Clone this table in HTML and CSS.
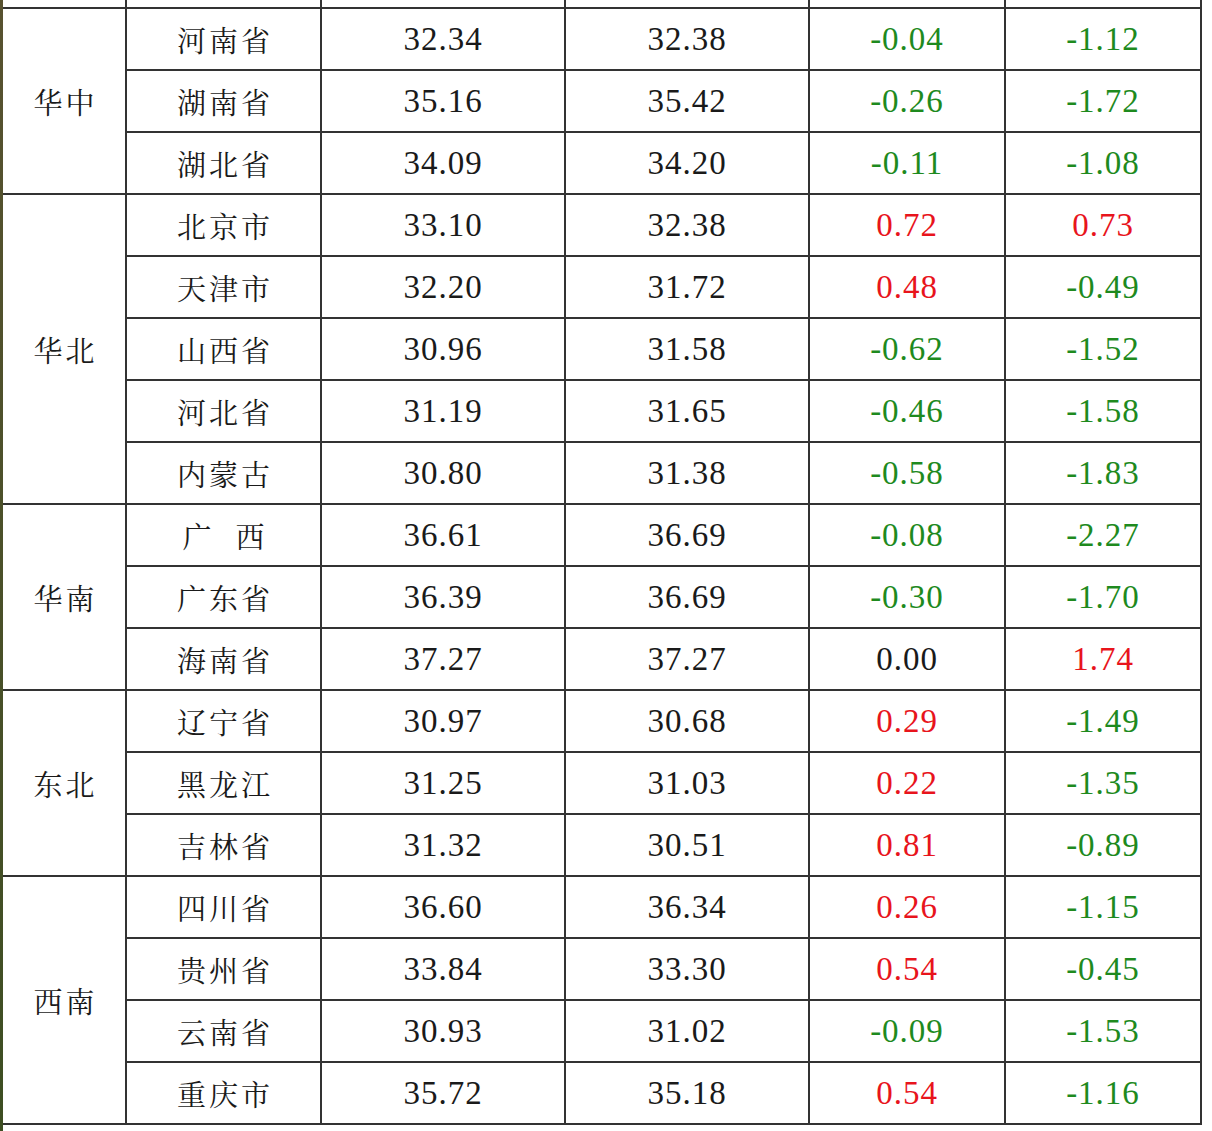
FILE: index.html
```html
<!DOCTYPE html>
<html lang="zh">
<head>
<meta charset="utf-8">
<link rel="stylesheet" href="styles.css">
</head>
<body>
<div class="frame">
<table class="prices">
<colgroup>
<col class="c-region"><col class="c-prov"><col class="c-num"><col class="c-num"><col class="c-chg"><col class="c-chg">
</colgroup>
<tbody>
<tr class="cut"><td></td><td></td><td></td><td></td><td></td><td></td></tr>
<tr><td class="region" rowspan="3">华中</td><td class="prov">河南省</td><td class="num">32.34</td><td class="num">32.38</td><td class="num down">-0.04</td><td class="num down">-1.12</td></tr>
<tr><td class="prov">湖南省</td><td class="num">35.16</td><td class="num">35.42</td><td class="num down">-0.26</td><td class="num down">-1.72</td></tr>
<tr><td class="prov">湖北省</td><td class="num">34.09</td><td class="num">34.20</td><td class="num down">-0.11</td><td class="num down">-1.08</td></tr>
<tr><td class="region" rowspan="5">华北</td><td class="prov">北京市</td><td class="num">33.10</td><td class="num">32.38</td><td class="num up">0.72</td><td class="num up">0.73</td></tr>
<tr><td class="prov">天津市</td><td class="num">32.20</td><td class="num">31.72</td><td class="num up">0.48</td><td class="num down">-0.49</td></tr>
<tr><td class="prov">山西省</td><td class="num">30.96</td><td class="num">31.58</td><td class="num down">-0.62</td><td class="num down">-1.52</td></tr>
<tr><td class="prov">河北省</td><td class="num">31.19</td><td class="num">31.65</td><td class="num down">-0.46</td><td class="num down">-1.58</td></tr>
<tr><td class="prov">内蒙古</td><td class="num">30.80</td><td class="num">31.38</td><td class="num down">-0.58</td><td class="num down">-1.83</td></tr>
<tr><td class="region" rowspan="3">华南</td><td class="prov">广&nbsp;&nbsp;西</td><td class="num">36.61</td><td class="num">36.69</td><td class="num down">-0.08</td><td class="num down">-2.27</td></tr>
<tr><td class="prov">广东省</td><td class="num">36.39</td><td class="num">36.69</td><td class="num down">-0.30</td><td class="num down">-1.70</td></tr>
<tr><td class="prov">海南省</td><td class="num">37.27</td><td class="num">37.27</td><td class="num">0.00</td><td class="num up">1.74</td></tr>
<tr><td class="region" rowspan="3">东北</td><td class="prov">辽宁省</td><td class="num">30.97</td><td class="num">30.68</td><td class="num up">0.29</td><td class="num down">-1.49</td></tr>
<tr><td class="prov">黑龙江</td><td class="num">31.25</td><td class="num">31.03</td><td class="num up">0.22</td><td class="num down">-1.35</td></tr>
<tr><td class="prov">吉林省</td><td class="num">31.32</td><td class="num">30.51</td><td class="num up">0.81</td><td class="num down">-0.89</td></tr>
<tr><td class="region" rowspan="4">西南</td><td class="prov">四川省</td><td class="num">36.60</td><td class="num">36.34</td><td class="num up">0.26</td><td class="num down">-1.15</td></tr>
<tr><td class="prov">贵州省</td><td class="num">33.84</td><td class="num">33.30</td><td class="num up">0.54</td><td class="num down">-0.45</td></tr>
<tr><td class="prov">云南省</td><td class="num">30.93</td><td class="num">31.02</td><td class="num down">-0.09</td><td class="num down">-1.53</td></tr>
<tr><td class="prov">重庆市</td><td class="num">35.72</td><td class="num">35.18</td><td class="num up">0.54</td><td class="num down">-1.16</td></tr>
</tbody>
</table>
</div>
</body>
</html>
```
FILE: styles.css
```css
html, body {
  margin: 0;
  padding: 0;
  background: #ffffff;
}

.frame {
  width: 1199px;
  min-height: 1131px;
  border-left: 3px solid #4a4a28;
  border-image: linear-gradient(to bottom, #585230, #3d4e22) 1;
}

.prices {
  border-collapse: separate;
  border-spacing: 0;
  table-layout: fixed;
  width: 1199px;
  font-family: "Liberation Serif", "Noto Serif CJK SC", "Noto Sans CJK SC", serif;
  color: #1a1a1a;
}

.c-region { width: 124px; }
.c-prov { width: 195px; }
.c-num { width: 244px; }
.c-chg { width: 196px; }

.prices td {
  box-sizing: border-box;
  height: 62px;
  padding: 0;
  text-align: center;
  vertical-align: middle;
  border-right: 2px solid #333333;
  border-bottom: 2px solid #333333;
}

.prices tr.cut td {
  height: 9px;
}

.prices td.region,
.prices td.prov {
  font-family: "Noto Serif CJK SC", "Noto Sans CJK SC", serif;
  font-size: 29px;
  letter-spacing: 3px;
  text-indent: 3px;
}

.prices td.num {
  font-size: 33px;
  letter-spacing: 1px;
}

.prices td.up { color: #e8141c; }
.prices td.down { color: #1e8a1e; }
```
